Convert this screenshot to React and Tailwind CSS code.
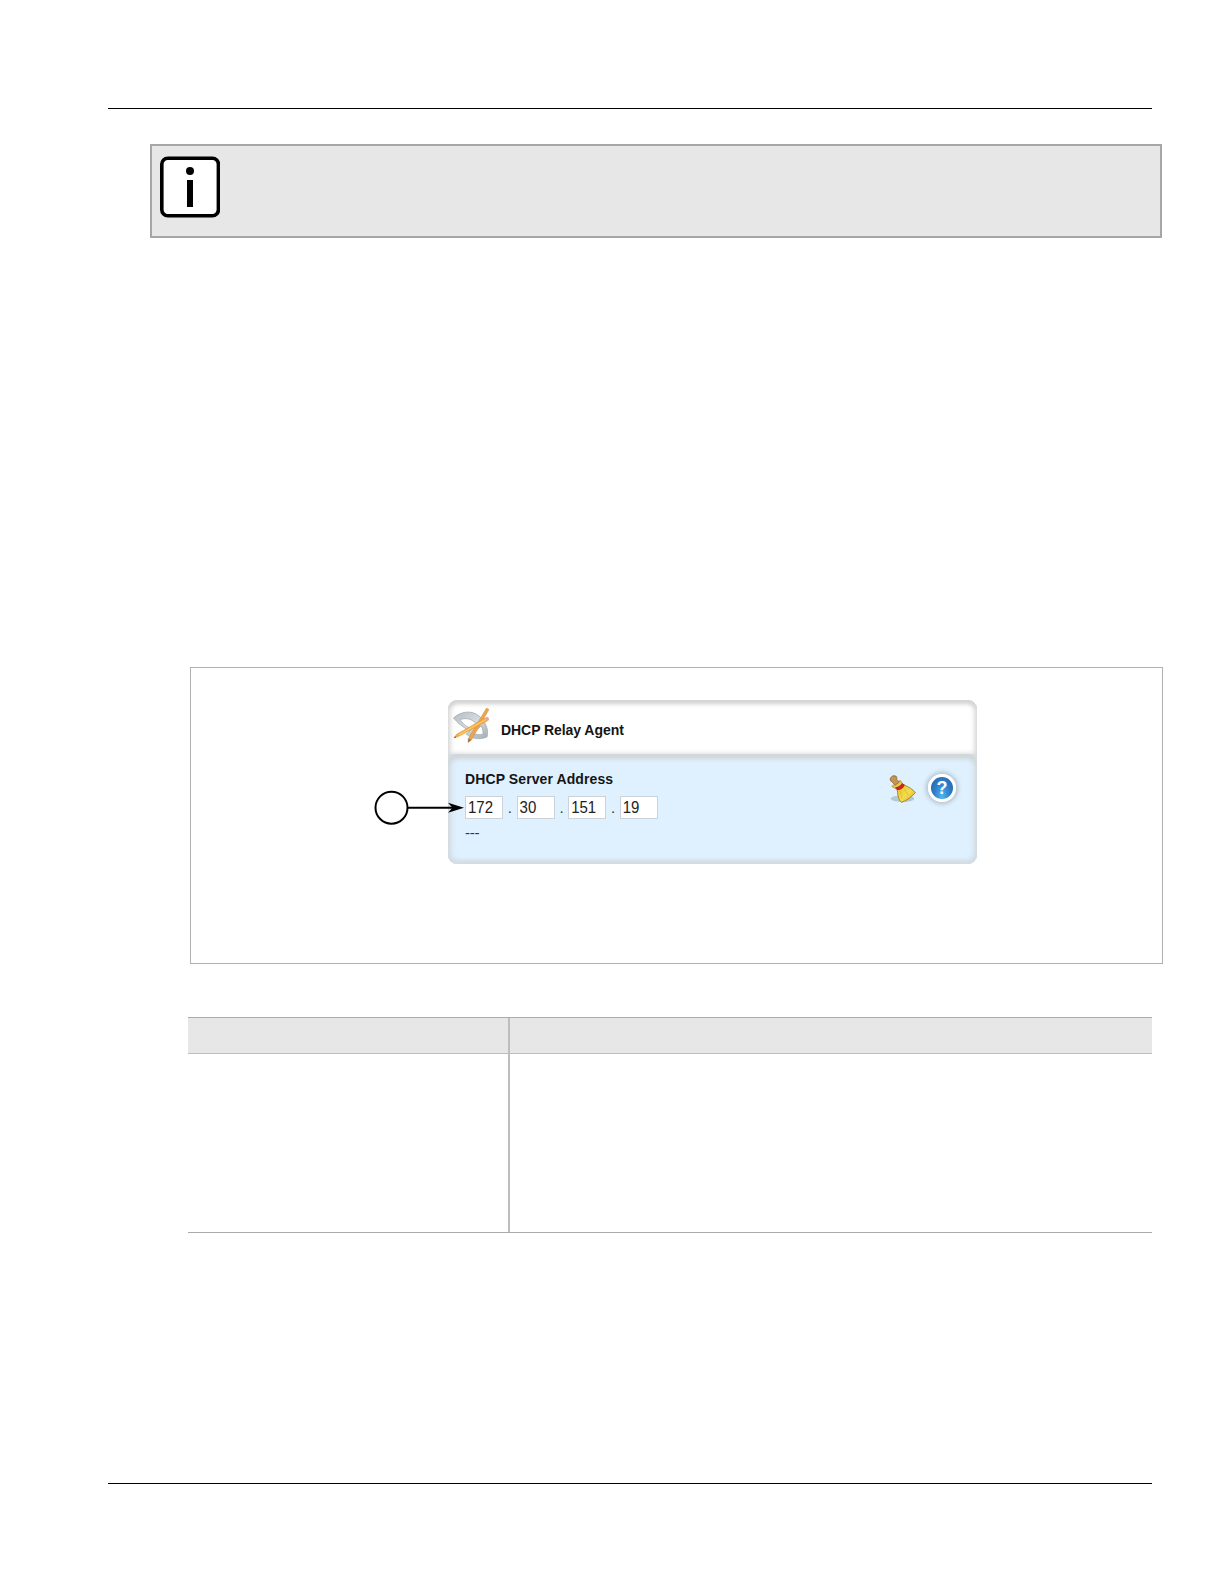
import React from "react";

const ADDRESS = ["172", "30", "151", "19"];

// Icons
const InfoIcon = () => (
  <svg viewBox="0 0 60 62" className="w-[60px] h-[62px]">
    <rect x="1.800" y="2.200" width="56.600" height="57.600" rx="6" fill="#fff" stroke="#000" strokeWidth="3.600" />
    <circle cx="30" cy="15" r="4" />
    <rect x="27" y="24" width="6" height="27" />
  </svg>
);

const ToolsIcon = () => (
  <svg viewBox="0 0 38 38" className="w-[38px] h-[38px]">
    <defs>
      <linearGradient id="steel" x1="0" y1="0" x2="1" y2="1">
        <stop offset="0" stopColor="#b4bdc2" />
        <stop offset="0.5" stopColor="#d5dce0" />
        <stop offset="1" stopColor="#a3adb3" />
      </linearGradient>
    </defs>
    <path
      d="M0.500 11 C8 4 19 3 26 9 C33 15 36 23 34 30 C27 33 19 32 13 27 L17 24 C8 19 5 16 0.500 11 Z M7 12.500 C11 18 14 20 18 21.500 L23.500 17 C19 12 14 10.500 7 12.500 Z M28 19 L20 26 C23 28 27 28 30 27 C30 24 30 22 28 19 Z"
      fill="url(#steel)"
      stroke="#a5afb5"
      strokeWidth="0.8"
      fillRule="evenodd"
    />
    <path d="M33.500 1 L36 2.500 L18.500 33 L15 35.500 L15.300 31.500 Z" fill="#eda54a" stroke="#c8843c" strokeWidth="0.4" />
    <path d="M15.300 31.500 L18.500 33 L15 35.500 Z" fill="#8b7a68" />
    <path d="M32 11 L34.300 14 L5.500 29.500 L1 31 L3.500 27.300 Z" fill="#f5ad3f" stroke="#d98e34" strokeWidth="0.4" />
    <path d="M6 27.800 L32.500 12.700" stroke="#ffd786" strokeWidth="0.9" />
    <path d="M32 11 L34 9.800 Q36.500 10.500 35.800 13.200 L34.300 14 Z" fill="#dfa4a6" />
    <path d="M1 31 L2.100 29.300 L3.300 30.300 Z" fill="#51473d" />
  </svg>
);

const BroomIcon = () => (
  <svg viewBox="0 0 28 28" className="w-[30px] h-[30px]">
    <defs>
      <linearGradient id="straw" x1="0" y1="0" x2="1" y2="1">
        <stop offset="0" stopColor="#e8c42c" />
        <stop offset="0.55" stopColor="#f3dc4c" />
        <stop offset="1" stopColor="#d5a81d" />
      </linearGradient>
    </defs>
    <ellipse cx="14.500" cy="23" rx="11" ry="3" fill="#9eb2bf" opacity="0.65" />
    <path d="M9.500 14 L15.500 10 C20 12 24 14 26.500 17.500 C24 20 19 25 13.500 26.500 C10 23.500 10 18 9.500 14 Z" fill="url(#straw)" stroke="#9d7819" strokeWidth="0.8" />
    <path d="M12.500 16 L14 23 M16 14 L20 20" stroke="#d6b12f" strokeWidth="0.6" />
    <path d="M4.500 11.500 L12.500 6 L14.500 9 L8.500 14 Z" fill="#e7c845" stroke="#a17b20" strokeWidth="0.6" />
    <path d="M7.500 12.500 Q12.500 12 14 8.500 L16.500 10 Q15.500 14.500 9.500 15.200 Z" fill="#cb241c" />
    <path d="M3 4 Q5 .3 8.500 2 Q9.700 3 9 5 L11.500 7.500 L7.500 10.500 L5 7.500 Q2.500 6.700 3 4 Z" fill="#c59450" stroke="#8c6135" strokeWidth="0.7" />
  </svg>
);

const HelpIcon = () => (
  <div className="w-7 h-7 rounded-full border-3 border-white bg-radial-[at_50%_90%] from-[#52b4ee] via-[#2f7fca] to-[#225eac] shadow-[0_0_4px_2px_#b3c2cc] flex items-center justify-center">
    <span className="text-[18px] leading-none font-bold text-white">?</span>
  </div>
);

// Numbered pointer that sits over the figure
const Callout = () => (
  <svg viewBox="0 0 92 36" className="absolute left-[183px] top-[122px] w-[92px] h-9">
    <circle cx="17.500" cy="17.700" r="16" fill="#fff" stroke="#000" strokeWidth="2" />
    <path d="M33.500 17.700 H80" stroke="#000" strokeWidth="2" />
    <path d="M90 17.700 L74 12.700 L78.500 17.700 L74 22.700 Z" />
  </svg>
);

const Note = () => (
  <div className="ml-[42px] w-[1012px] h-[94px] border-2 border-[#a6a6a6] bg-[#e7e7e7] pl-2 pt-[10px]">
    <InfoIcon />
  </div>
);

const AddressInput = () => (
  <div className="flex items-center h-[23px] mt-[8px]">
    {ADDRESS.map((part, index) => (
      <React.Fragment key={index}>
        {index > 0 && (
          <span className="w-[13.400px] text-center text-[15px] leading-[23px] text-[#333]">.</span>
        )}
        <div className="w-[38.200px] h-[23px] border border-[#ccd3d8] bg-white pl-[2px] text-[15px] leading-[21px] text-[#222]">
          <span className="inline-block scale-y-[1.05]">{part}</span>
        </div>
      </React.Fragment>
    ))}
  </div>
);

const RelayPanel = () => (
  <div className="w-[529px] rounded-[9px] bg-[#d9dcde]">
    <div className="h-[54px] rounded-t-[9px] bg-white shadow-[inset_0_4px_4px_#d3d3d3,inset_3px_0_5px_#e2e2e2,inset_-3px_0_5px_#e2e2e2] flex pl-[5px] pt-[7px]">
      <ToolsIcon />
      <h2 className="ml-[10px] mt-[13px] text-[14px] leading-5 font-bold tracking-[-0.06px] text-[#151515] origin-center scale-y-110">
        DHCP Relay Agent
      </h2>
    </div>
    <div className="h-[110px] rounded-[9px] bg-[#dff0fe] shadow-[inset_0_5px_4px_#d0d6da,inset_3px_0_6px_#d5dee4,inset_-3px_0_6px_#d5dee4,inset_0_-3px_4px_#ced7dd] flex justify-between pl-[17px] pr-[21px]">
      <div className="pt-[14px]">
        <h3 className="text-[14px] leading-5 font-bold tracking-[0.1px] text-[#151515] origin-center scale-y-110">
          DHCP Server Address
        </h3>
        <AddressInput />
        <p className="mt-[4px] text-[15px] leading-5 tracking-[-0.3px] text-[#2424c8]">---</p>
      </div>
      <div className="flex gap-[11px] pt-[20px]">
        <BroomIcon />
        <HelpIcon />
      </div>
    </div>
  </div>
);

const Figure = () => (
  <div className="relative ml-[82px] w-[973px] h-[297px] border border-[#b0b0b0] pl-[257px] pt-8">
    <RelayPanel />
    <Callout />
  </div>
);

const ParameterTable = () => (
  <div className="ml-[80px] w-[964px] h-[216px] flex flex-col border-y border-[#ababab]">
    <div className="flex h-[36px] bg-[#e7e7e7] border-b border-[#bdbdbd]">
      <div className="w-[322px] border-r-2 border-[#bdbdbd]" />
      <div className="flex-1" />
    </div>
    <div className="flex flex-1">
      <div className="w-[322px] border-r-2 border-[#bdbdbd]" />
      <div className="flex-1" />
    </div>
  </div>
);

const App = () => (
  <main className="w-[1224px] h-[1584px] bg-white pl-[108px] pt-[108px] font-['Liberation_Sans',sans-serif]">
    <div className="w-[1044px] h-px bg-black" />
    <div className="pt-[35px]">
      <Note />
    </div>
    <div className="pt-[429px]">
      <Figure />
    </div>
    <div className="pt-[53px]">
      <ParameterTable />
    </div>
    <div className="mt-[250px] w-[1044px] h-px bg-black" />
  </main>
);

export default App;
